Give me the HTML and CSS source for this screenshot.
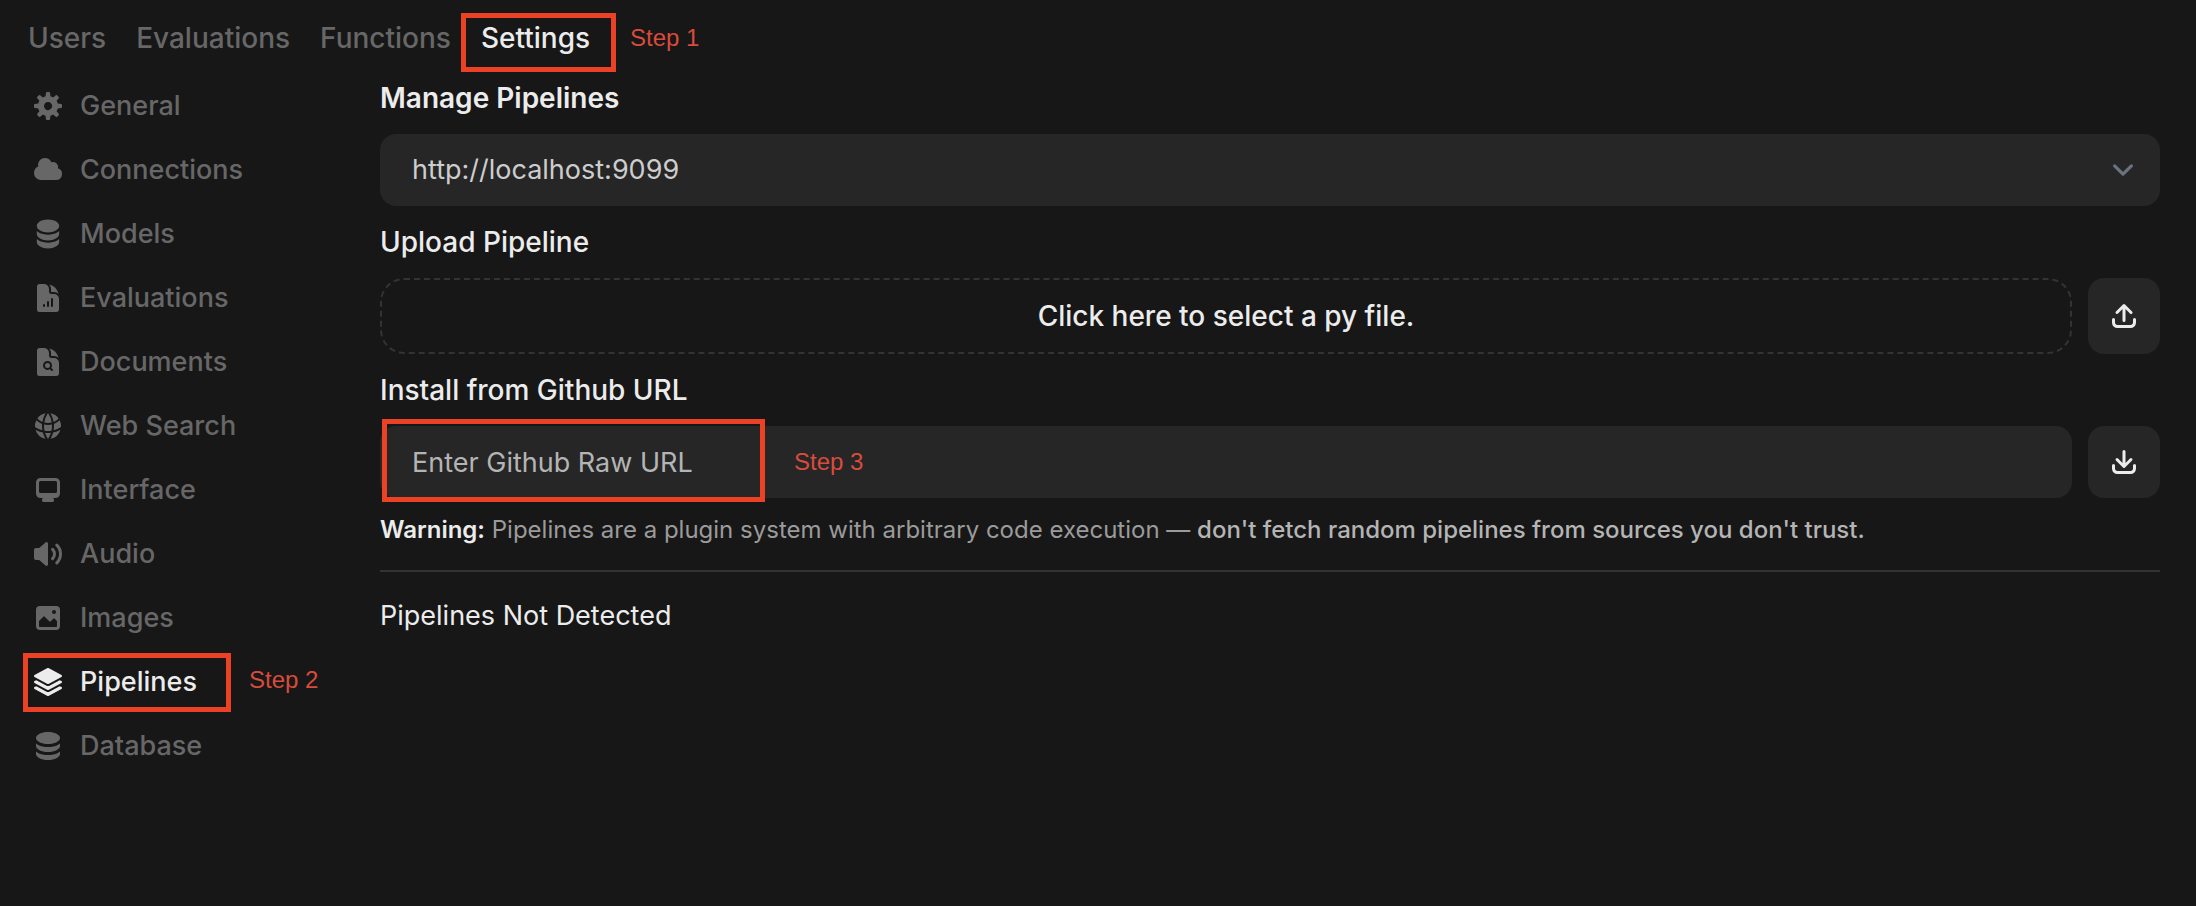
FILE: index.html
```html
<!DOCTYPE html>
<html lang="en">
<head>
<meta charset="utf-8">
<meta name="viewport" content="width=device-width, initial-scale=1">
<title>Settings – Pipelines</title>
<link rel="stylesheet" href="styles.css">
</head>
<body>
<nav class="tabs" aria-label="Admin">
  <a class="tab" href="#users">Users</a>
  <a class="tab" href="#evaluations">Evaluations</a>
  <a class="tab" href="#functions">Functions</a>
  <div class="marked marked-tab">
    <a class="tab active" href="#settings" aria-current="page">Settings</a>
    <span class="step">Step 1</span>
  </div>
</nav>
<div class="layout">
  <nav class="sidebar" aria-label="Settings">
    <a class="item" href="#general">
      <svg class="icon" viewBox="0 0 16 16" aria-hidden="true"><path fill-rule="evenodd" d="M6.955 1.45A.5.5 0 0 1 7.452 1h1.096a.5.5 0 0 1 .497.45l.17 1.699c.484.12.94.312 1.356.562l1.321-1.081a.5.5 0 0 1 .67.033l.774.775a.5.5 0 0 1 .034.67l-1.08 1.32c.25.417.44.873.561 1.357l1.699.17a.5.5 0 0 1 .45.497v1.096a.5.5 0 0 1-.45.497l-1.699.17c-.12.484-.312.94-.562 1.356l1.082 1.322a.5.5 0 0 1-.034.67l-.774.774a.5.5 0 0 1-.67.033l-1.322-1.08c-.416.25-.872.44-1.356.561l-.17 1.699a.5.5 0 0 1-.497.45H7.452a.5.5 0 0 1-.497-.45l-.17-1.699a4.973 4.973 0 0 1-1.356-.562L4.108 13.37a.5.5 0 0 1-.67-.033l-.774-.775a.5.5 0 0 1-.034-.67l1.08-1.32a4.971 4.971 0 0 1-.561-1.357l-1.699-.17A.5.5 0 0 1 1 8.548V7.452a.5.5 0 0 1 .45-.497l1.699-.17c.12-.484.312-.94.562-1.356L2.629 4.107a.5.5 0 0 1 .034-.67l.774-.774a.5.5 0 0 1 .67-.033L5.43 3.71a4.97 4.97 0 0 1 1.356-.561l.17-1.699ZM6 8c0 .538.212 1.026.558 1.385l.057.057a2 2 0 0 0 2.828-2.828l-.058-.056A2 2 0 0 0 6 8Z"/></svg>
      General</a>
    <a class="item" href="#connections">
      <svg class="icon" viewBox="0 0 16 16" aria-hidden="true"><path d="M1 9.5A3.5 3.5 0 0 0 4.5 13H12a3 3 0 0 0 .917-5.857 2.503 2.503 0 0 0-3.198-3.019 3.5 3.5 0 0 0-6.628 2.171A3.5 3.5 0 0 0 1 9.5Z"/></svg>
      Connections</a>
    <a class="item" href="#models">
      <svg class="icon" viewBox="0 0 20 20" aria-hidden="true"><path d="M10 1c3.866 0 7 1.79 7 4s-3.134 4-7 4-7-1.79-7-4 3.134-4 7-4zm5.694 8.13c.464-.264.91-.583 1.306-.952V10c0 2.21-3.134 4-7 4s-7-1.79-7-4V8.178c.396.37.842.688 1.306.953C5.838 10.006 7.854 10.5 10 10.5s4.162-.494 5.694-1.37zM3 13.179V15c0 2.21 3.134 4 7 4s7-1.79 7-4v-1.822c-.396.37-.842.688-1.306.953-1.532.875-3.548 1.369-5.694 1.369s-4.162-.494-5.694-1.37A7.009 7.009 0 013 13.179z"/></svg>
      Models</a>
    <a class="item" href="#model-evaluations">
      <svg class="icon" viewBox="0 0 24 24" aria-hidden="true"><path fill-rule="evenodd" d="M5.625 1.5H9a3.75 3.75 0 0 1 3.75 3.75v1.875c0 1.036.84 1.875 1.875 1.875H16.5a3.75 3.75 0 0 1 3.75 3.75v7.875c0 1.035-.84 1.875-1.875 1.875H5.625a1.875 1.875 0 0 1-1.875-1.875V3.375c0-1.036.84-1.875 1.875-1.875ZM9.75 17.25a.75.75 0 0 0-1.5 0V18a.75.75 0 0 0 1.5 0v-.75Zm2.25-3a.75.75 0 0 1 .75.75v3a.75.75 0 0 1-1.5 0v-3a.75.75 0 0 1 .75-.75Zm3.75-1.5a.75.75 0 0 0-1.5 0V18a.75.75 0 0 0 1.5 0v-5.25Z"/><path d="M14.25 5.25a5.23 5.23 0 0 0-1.279-3.434 9.768 9.768 0 0 1 6.963 6.963A5.23 5.23 0 0 0 16.5 7.5h-1.875a.375.375 0 0 1-.375-.375V5.25Z"/></svg>
      Evaluations</a>
    <a class="item" href="#documents">
      <svg class="icon" viewBox="0 0 24 24" aria-hidden="true"><path d="M11.625 16.5a1.875 1.875 0 1 0 0-3.75 1.875 1.875 0 0 0 0 3.75Z"/><path fill-rule="evenodd" d="M5.625 1.5H9a3.75 3.75 0 0 1 3.75 3.75v1.875c0 1.036.84 1.875 1.875 1.875H16.5a3.75 3.75 0 0 1 3.75 3.75v7.875c0 1.035-.84 1.875-1.875 1.875H5.625a1.875 1.875 0 0 1-1.875-1.875V3.375c0-1.036.84-1.875 1.875-1.875Zm6 16.5c.66 0 1.277-.19 1.797-.518l1.048 1.048a.75.75 0 0 0 1.06-1.06l-1.047-1.048A3.375 3.375 0 1 0 11.625 18Z"/><path d="M14.25 5.25a5.23 5.23 0 0 0-1.279-3.434 9.768 9.768 0 0 1 6.963 6.963A5.23 5.23 0 0 0 16.5 7.5h-1.875a.375.375 0 0 1-.375-.375V5.25Z"/></svg>
      Documents</a>
    <a class="item" href="#web-search">
      <svg class="icon" viewBox="0 0 24 24" aria-hidden="true"><path d="M21.721 12.752a9.711 9.711 0 0 0-.945-5.003 12.754 12.754 0 0 1-4.339 2.708 18.991 18.991 0 0 1-.214 4.772 17.165 17.165 0 0 0 5.498-2.477ZM14.634 15.55a17.324 17.324 0 0 0 .332-4.647c-.952.227-1.945.347-2.966.347-1.021 0-2.014-.12-2.966-.347a17.515 17.515 0 0 0 .332 4.647 17.385 17.385 0 0 0 5.268 0ZM9.772 17.119a18.963 18.963 0 0 0 4.456 0A17.182 17.182 0 0 1 12 21.724a17.18 17.18 0 0 1-2.228-4.605ZM7.777 15.23a18.87 18.87 0 0 1-.214-4.774 12.753 12.753 0 0 1-4.34-2.708 9.711 9.711 0 0 0-.944 5.004 17.165 17.165 0 0 0 5.498 2.477ZM21.356 14.752a9.765 9.765 0 0 1-7.478 6.817 18.64 18.64 0 0 0 1.988-4.718 18.627 18.627 0 0 0 5.49-2.098ZM2.644 14.752c1.682.971 3.53 1.688 5.49 2.099a18.64 18.64 0 0 0 1.988 4.718 9.765 9.765 0 0 1-7.478-6.816ZM13.878 2.43a9.755 9.755 0 0 1 6.116 3.986 11.267 11.267 0 0 1-3.746 2.504 18.63 18.63 0 0 0-2.37-6.49ZM12 2.276a17.152 17.152 0 0 1 2.805 7.121c-.897.23-1.837.353-2.805.353-.968 0-1.908-.122-2.805-.353A17.151 17.151 0 0 1 12 2.276ZM10.122 2.43a18.629 18.629 0 0 0-2.37 6.49 11.266 11.266 0 0 1-3.746-2.504 9.754 9.754 0 0 1 6.116-3.985Z"/></svg>
      Web Search</a>
    <a class="item" href="#interface">
      <svg class="icon" viewBox="0 0 16 16" aria-hidden="true"><path fill-rule="evenodd" d="M2 4.25A2.25 2.25 0 0 1 4.25 2h7.5A2.25 2.25 0 0 1 14 4.25v5.5A2.25 2.25 0 0 1 11.75 12h-1.312c.1.128.21.248.328.36a.75.75 0 0 1 .234.545v.345a.75.75 0 0 1-.75.75h-4.5a.75.75 0 0 1-.75-.75v-.345a.75.75 0 0 1 .234-.545c.118-.111.228-.232.328-.36H4.25A2.25 2.25 0 0 1 2 9.75v-5.5Zm2.25-.75a.75.75 0 0 0-.75.75v4.5c0 .414.336.75.75.75h7.5a.75.75 0 0 0 .75-.75v-4.5a.75.75 0 0 0-.75-.75h-7.5Z"/></svg>
      Interface</a>
    <a class="item" href="#audio">
      <svg class="icon" viewBox="0 0 16 16" aria-hidden="true"><path d="M7.557 2.066A.75.75 0 0 1 8 2.75v10.5a.75.75 0 0 1-1.248.56L3.59 11H2a1 1 0 0 1-1-1V6a1 1 0 0 1 1-1h1.59l3.162-2.81a.75.75 0 0 1 .805-.124ZM12.95 3.05a.75.75 0 1 0-1.06 1.06 5.5 5.5 0 0 1 0 7.78.75.75 0 1 0 1.06 1.06 7 7 0 0 0 0-9.9Z"/><path d="M10.828 5.172a.75.75 0 1 0-1.06 1.06 2.5 2.5 0 0 1 0 3.536.75.75 0 1 0 1.06 1.06 4 4 0 0 0 0-5.656Z"/></svg>
      Audio</a>
    <a class="item" href="#images">
      <svg class="icon" viewBox="0 0 16 16" aria-hidden="true"><path fill-rule="evenodd" d="M2 4a2 2 0 0 1 2-2h8a2 2 0 0 1 2 2v8a2 2 0 0 1-2 2H4a2 2 0 0 1-2-2V4Zm10.5 5.707a.5.5 0 0 0-.146-.353l-1-1a.5.5 0 0 0-.708 0L9.354 9.646a.5.5 0 0 1-.708 0L6.354 7.354a.5.5 0 0 0-.708 0l-2 2a.5.5 0 0 0-.146.353V12a.5.5 0 0 0 .5.5h8a.5.5 0 0 0 .5-.5V9.707ZM12 5a1 1 0 1 1-2 0 1 1 0 0 1 2 0Z"/></svg>
      Images</a>
    <div class="marked marked-item">
      <a class="item active" href="#pipelines" aria-current="page">
        <svg class="icon" viewBox="0 0 24 24" aria-hidden="true"><path d="M11.644 1.59a.75.75 0 0 1 .712 0l9.75 5.25a.75.75 0 0 1 0 1.32l-9.75 5.25a.75.75 0 0 1-.712 0l-9.75-5.25a.75.75 0 0 1 0-1.32l9.75-5.25Z"/><path d="m3.265 10.602 7.668 4.129a2.25 2.25 0 0 0 2.134 0l7.668-4.13 1.37.739a.75.75 0 0 1 0 1.32l-9.75 5.25a.75.75 0 0 1-.71 0l-9.75-5.25a.75.75 0 0 1 0-1.32l1.37-.738Z"/><path d="m10.933 19.231-7.668-4.13-1.37.739a.75.75 0 0 0 0 1.32l9.75 5.25c.221.12.489.12.71 0l9.75-5.25a.75.75 0 0 0 0-1.32l-1.37-.738-7.668 4.13a2.25 2.25 0 0 1-2.134-.001Z"/></svg>
        Pipelines</a>
      <span class="step">Step 2</span>
    </div>
    <a class="item" href="#database">
      <svg class="icon" viewBox="0 0 16 16" aria-hidden="true"><path d="M8 7c3.314 0 6-1.343 6-3s-2.686-3-6-3-6 1.343-6 3 2.686 3 6 3Z"/><path d="M8 8.5c1.84 0 3.579-.37 4.914-1.037A6.33 6.33 0 0 0 14 6.78V8c0 1.657-2.686 3-6 3S2 9.657 2 8V6.78c.346.273.72.5 1.087.683C4.42 8.131 6.16 8.5 8 8.5Z"/><path d="M8 12.5c1.84 0 3.579-.37 4.914-1.037.366-.183.74-.41 1.086-.684V12c0 1.657-2.686 3-6 3s-6-1.343-6-3v-1.22c.346.273.72.5 1.087.683C4.42 12.131 6.16 12.5 8 12.5Z"/></svg>
      Database</a>
  </nav>
  <main class="content">
    <label class="title strong" for="server">Manage Pipelines</label>
    <div class="select-wrap">
      <select class="field" id="server"><option>http://localhost:9099</option></select>
      <svg class="chevron" viewBox="0 0 20 20" aria-hidden="true"><path d="m6 8 4 4 4-4"/></svg>
    </div>
    <h2 class="title">Upload Pipeline</h2>
    <div class="row">
      <button class="dropzone" type="button">Click here to select a py file.</button>
      <button class="action" type="button" aria-label="Upload">
        <svg class="icon" viewBox="0 0 16 16" aria-hidden="true"><path d="M7.25 10.25a.75.75 0 0 0 1.5 0V4.56l2.22 2.22a.75.75 0 1 0 1.06-1.06l-3.5-3.5a.75.75 0 0 0-1.06 0l-3.5 3.5a.75.75 0 0 0 1.06 1.06l2.22-2.22v5.69Z"/><path d="M3.5 9.75a.75.75 0 0 0-1.5 0v1.5A2.75 2.75 0 0 0 4.75 14h6.5A2.75 2.75 0 0 0 14 11.25v-1.5a.75.75 0 0 0-1.5 0v1.5c0 .69-.56 1.25-1.25 1.25h-6.5c-.69 0-1.25-.56-1.25-1.25v-1.5Z"/></svg>
      </button>
    </div>
    <label class="title" for="url">Install from Github URL</label>
    <div class="row">
      <div class="marked marked-field">
        <input class="field" id="url" type="text" placeholder="Enter Github Raw URL">
        <span class="step">Step 3</span>
      </div>
      <button class="action" type="button" aria-label="Download">
        <svg class="icon" viewBox="0 0 16 16" aria-hidden="true"><path d="M8.75 2.75a.75.75 0 0 0-1.5 0v5.69L5.03 6.22a.75.75 0 0 0-1.06 1.06l3.5 3.5a.75.75 0 0 0 1.06 0l3.5-3.5a.75.75 0 0 0-1.06-1.06L8.75 8.44V2.75Z"/><path d="M3.5 9.75a.75.75 0 0 0-1.5 0v1.5A2.75 2.75 0 0 0 4.75 14h6.5A2.75 2.75 0 0 0 14 11.25v-1.5a.75.75 0 0 0-1.5 0v1.5c0 .69-.56 1.25-1.25 1.25h-6.5c-.69 0-1.25-.56-1.25-1.25v-1.5Z"/></svg>
      </button>
    </div>
    <p class="warning"><strong class="warning-label">Warning:</strong> Pipelines are a plugin system with arbitrary code execution — <strong class="warning-advice">don't fetch random pipelines from sources you don't trust.</strong></p>
    <hr class="rule">
    <p class="status">Pipelines Not Detected</p>
  </main>
</div>
</body>
</html>
```

FILE: styles.css
```css
*,
*::before,
*::after {
  box-sizing: border-box;
}

body {
  margin: 0;
  min-height: 100vh;
  background: #171717;
  color: #ececec;
  font: 400 27px/40px Inter, "Liberation Sans", sans-serif;
}

a {
  color: #676767;
  font-weight: 500;
  text-decoration: none;
}

.active {
  color: #ececec;
}

.icon {
  flex: none;
  width: 32px;
  height: 32px;
  fill: currentColor;
}

.tabs {
  display: flex;
  gap: 30px;
  padding: 18px 28px 16px;
  font-size: 28px;
}

.layout {
  display: grid;
  grid-template-columns: 348px minmax(0, 1fr);
  padding: 0 36px 0 32px;
}

.sidebar {
  display: flex;
  flex-direction: column;
}

.item {
  display: flex;
  align-items: center;
  gap: 16px;
  height: 64px;
}

.content {
  display: flex;
  flex-direction: column;
  gap: 16px;
  padding-top: 4px;
}

.title {
  margin: 0;
  font-size: 28px;
  font-weight: 500;
}

.strong {
  font-weight: 600;
}

.row {
  display: flex;
  gap: 16px;
}

.select-wrap {
  position: relative;
  display: flex;
}

.field {
  width: 100%;
  height: 72px;
  padding: 0 32px;
  border: 0;
  border-radius: 16px;
  background: #262626;
  color: #cdcdcd;
  font: inherit;
  appearance: none;
}

.field::placeholder {
  color: #b4b4b4;
  opacity: 1;
}

.chevron {
  position: absolute;
  top: 15px;
  right: 16px;
  width: 42px;
  height: 42px;
  fill: none;
  stroke: #6b7280;
  stroke-width: 1.5;
  stroke-linecap: round;
  stroke-linejoin: round;
  pointer-events: none;
}

.dropzone {
  flex: 1;
  height: 76px;
  border: 2px dashed #333;
  border-radius: 24px;
  background: transparent;
  color: #ececec;
  font: inherit;
  font-size: 28px;
  font-weight: 500;
}

.action {
  display: flex;
  align-items: center;
  justify-content: center;
  width: 72px;
  padding: 0;
  border: 0;
  border-radius: 16px;
  background: #262626;
  color: #ececec;
}

.warning {
  margin: 0;
  color: #9b9b9b;
  font-size: 24px;
  line-height: 32px;
}

.warning-label {
  color: #ececec;
  font-weight: 600;
}

.warning-advice {
  color: #b4b4b4;
  font-weight: 500;
}

.rule {
  width: 100%;
  height: 2px;
  margin: 8px 0;
  border: 0;
  background: #333;
}

.status {
  margin: 0;
}

/* Walkthrough highlights, laid over the controls they point at */
.marked {
  position: relative;
}

.marked::after {
  content: "";
  position: absolute;
  border: 5px solid #eb4226;
  pointer-events: none;
}

.marked-tab::after {
  inset: -5px -26px -14px -20px;
}

.marked-item::after {
  top: 3px;
  left: -9px;
  width: 208px;
  height: 59px;
}

.marked-field {
  flex: 1;
}

.marked-field::after {
  top: -7px;
  left: 2px;
  width: 383px;
  height: 83px;
}

.step {
  position: absolute;
  color: #d94b3d;
  font: 400 24px/40px "Liberation Sans", Arial, sans-serif;
  white-space: nowrap;
}

.marked-tab .step {
  top: 0;
  left: 100%;
  margin-left: 40px;
}

.marked-item .step {
  top: 10px;
  left: 217px;
}

.marked-field .step {
  top: 16px;
  left: 414px;
}
```
